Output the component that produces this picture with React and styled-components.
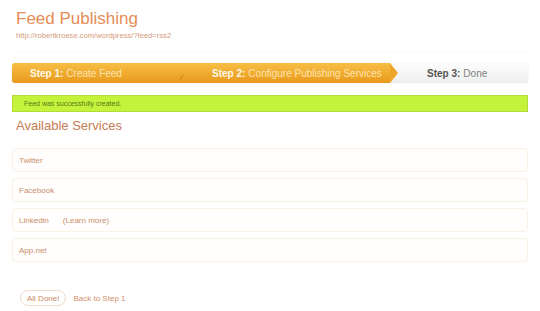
import React from "react";
import styled, { createGlobalStyle } from "styled-components";

const GlobalStyle = createGlobalStyle`
  html, body {
    margin: 0;
    padding: 0;
    background: #ffffff;
  }
  body {
    font-family: "Liberation Sans", Arial, sans-serif;
  }
`;

const Page = styled.div`
  width: 540px;
  height: 311px;
  overflow: hidden;
  padding: 0 12px;
  box-sizing: border-box;
`;

const Header = styled.header`
  padding: 8px 4px 0;
  height: 52px;
  box-sizing: border-box;
  border-bottom: 1px solid #fdf8f1;
`;

const Title = styled.h1`
  margin: 0;
  font-size: 17px;
  font-weight: normal;
  line-height: 21px;
  color: #e48d55;
`;

const FeedUrl = styled.div`
  margin-top: 2px;
  font-size: 7.6px;
  color: #d59a7a;
`;

const Steps = styled.div`
  margin-top: 11px;
  display: flex;
  height: 20px;
  border-radius: 3px;
  overflow: hidden;
  background: linear-gradient(#fdfdfd, #eeeeee);
  box-shadow: 0 0 1px rgba(180, 160, 120, 0.6);
`;

const Step = styled.div`
  position: relative;
  display: flex;
  align-items: center;
  font-size: 10px;
  padding-left: ${(p) => p.$pad}px;
  width: ${(p) => p.$w}px;
  box-sizing: border-box;
  color: ${(p) => (p.$active ? "#fde3b0" : "#808080")};
  background: ${(p) =>
    p.$active ? "linear-gradient(#f7be45, #e99a1c)" : "transparent"};
  b {
    color: ${(p) => (p.$active ? "#fff8ea" : "#555")};
    margin-right: 3px;
  }
`;

const Arrow = styled.span`
  position: absolute;
  right: -8px;
  top: 0;
  width: 0;
  height: 0;
  border-top: 10px solid transparent;
  border-bottom: 10px solid transparent;
  border-left: 8px solid #efa628;
  z-index: 1;
`;

const Notch = styled.span`
  position: absolute;
  right: 2px;
  bottom: 2px;
  width: 1px;
  height: 7px;
  background: #b9781a;
  transform: rotate(35deg);
  opacity: 0.6;
`;

const Notice = styled.div`
  margin-top: 12px;
  height: 17px;
  display: flex;
  align-items: center;
  padding-left: 11px;
  background: #c5f33c;
  border: 1px solid #b3dc38;
  box-sizing: border-box;
  font-size: 7px;
  color: #5a7a18;
`;

const SectionTitle = styled.h2`
  margin: 6px 0 0 4px;
  font-size: 13px;
  font-weight: normal;
  line-height: 16px;
  color: #c57c52;
`;

const ServiceList = styled.div`
  margin-top: 14px;
  display: flex;
  flex-direction: column;
  gap: 6px;
`;

const ServiceRow = styled.div`
  height: 24px;
  display: flex;
  align-items: center;
  padding-left: 6px;
  gap: 14px;
  border: 1px solid #f8f1e4;
  border-radius: 3px;
  box-sizing: border-box;
  font-size: 8px;
  color: #c98e6c;
  background: #fffefc;
`;

const Footer = styled.div`
  margin-top: 28px;
  padding-left: 8px;
  display: flex;
  align-items: center;
  gap: 7px;
  font-size: 8px;
  color: #d2916c;
`;

const DoneButton = styled.span`
  display: inline-flex;
  align-items: center;
  height: 14px;
  padding: 0 6px;
  border: 1px solid #f2d8c8;
  border-radius: 8px;
  color: #c98862;
`;

const services = [
  { name: "Twitter" },
  { name: "Facebook" },
  { name: "Linkedin", extra: "(Learn more)" },
  { name: "App.net" },
];

export default function App() {
  return (
    <>
      <GlobalStyle />
      <Page>
        <Header>
          <Title>Feed Publishing</Title>
          <FeedUrl>http://robertkroese.com/wordpress/?feed=rss2</FeedUrl>
        </Header>
        <Steps>
          <Step $active $w={172} $pad={18}>
            <b>Step 1:</b> Create Feed
            <Notch />
          </Step>
          <Step $active $w={206} $pad={28}>
            <b>Step 2:</b> Configure Publishing Services
            <Arrow />
          </Step>
          <Step $w={138} $pad={37}>
            <b>Step 3:</b> Done
          </Step>
        </Steps>
        <Notice>Feed was successfully created.</Notice>
        <SectionTitle>Available Services</SectionTitle>
        <ServiceList>
          {services.map((s) => (
            <ServiceRow key={s.name}>
              <span>{s.name}</span>
              {s.extra && <span>{s.extra}</span>}
            </ServiceRow>
          ))}
        </ServiceList>
        <Footer>
          <DoneButton>All Done!</DoneButton>
          <span>Back to Step 1</span>
        </Footer>
      </Page>
    </>
  );
}
